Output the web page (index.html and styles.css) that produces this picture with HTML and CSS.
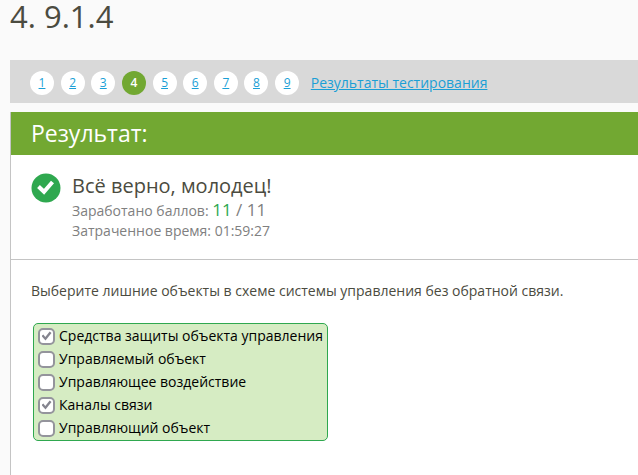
FILE: index.html
```
<!DOCTYPE html>
<html lang="ru">
<head>
    <meta charset="UTF-8">
    <meta name="viewport" content="width=device-width, initial-scale=1.0">
    <title>4. 9.1.4</title>
    <link rel="stylesheet" href="styles.css">
</head>
<body>
    <div class="container">
        <h1>4. 9.1.4</h1>

        <nav class="question-nav">
            <a class="question" href="#1">1</a>
            <a class="question" href="#2">2</a>
            <a class="question" href="#3">3</a>
            <span class="question current">4</span>
            <a class="question" href="#5">5</a>
            <a class="question" href="#6">6</a>
            <a class="question" href="#7">7</a>
            <a class="question" href="#8">8</a>
            <a class="question" href="#9">9</a>
            <a class="results-link" href="#results">Результаты тестирования</a>
        </nav>

        <main class="panel">
            <h2>Результат:</h2>

            <section class="result">
                <svg class="result-icon" viewBox="0 0 30 30" aria-hidden="true">
                    <circle cx="15" cy="15" r="14.5" fill="#2fa84f"/>
                    <path d="M7.5 13.5 L13 18.8 L21.5 9" fill="none" stroke="#fff" stroke-width="4"/>
                </svg>
                <div class="result-info">
                    <h3>Всё верно, молодец!</h3>
                    <p>Заработано баллов: <span class="score"><span class="earned">11</span> / 11</span></p>
                    <p>Затраченное время: 01:59:27</p>
                </div>
            </section>

            <section class="task">
                <p class="task-text">Выберите лишние объекты в схеме системы управления без обратной связи.</p>
                <div class="answers">
                    <label><input type="checkbox" checked>Средства защиты объекта управления</label>
                    <label><input type="checkbox">Управляемый объект</label>
                    <label><input type="checkbox">Управляющее воздействие</label>
                    <label><input type="checkbox" checked>Каналы связи</label>
                    <label><input type="checkbox">Управляющий объект</label>
                </div>
            </section>
        </main>
    </div>
</body>
</html>
```
FILE: styles.css
```
:root {
    --green: #72a832;
    --success: #2fa84f;
    --link: #1a9fd6;
    --text: #4b4b40;
    --muted: #808080;
    --border: #c4c4c4;
}

* {
    margin: 0;
    padding: 0;
    box-sizing: border-box;
}

body {
    background-color: #fafafa;
    color: var(--text);
    font-family: 'Open Sans', 'Noto Sans', sans-serif;
    font-size: 14px;
    line-height: 20px;
}

.container {
    display: flex;
    flex-direction: column;
    min-height: 100vh;
    padding-left: 10px;
}

h1 {
    margin-bottom: 28px;
    font-size: 31px;
    font-weight: 400;
    line-height: 32px;
}

.question-nav {
    margin-bottom: 9px;
    padding: 11px 20px 8px;
    background-color: #d9d9d9;
    font-size: 14px;
    line-height: 24px;
}

.question {
    display: inline-block;
    width: 24px;
    height: 24px;
    margin-right: 3px;
    border-radius: 50%;
    background-color: white;
    font-size: 12px;
    text-align: center;
    vertical-align: top;
}

.question-nav a {
    color: var(--link);
}

.question.current {
    background-color: var(--green);
    color: white;
    font-weight: 600;
}

.results-link {
    margin-left: 5px;
}

.panel {
    flex: 1;
    border-left: 1px solid var(--border);
    background-color: white;
}

h2 {
    padding: 0 20px;
    background-color: var(--green);
    color: white;
    font-size: 23px;
    font-weight: 400;
    line-height: 43px;
}

.result {
    display: flex;
    gap: 11px;
    padding: 18px 20px;
    border-bottom: 1px solid var(--border);
}

.result-icon {
    flex: none;
    width: 30px;
    height: 30px;
}

.result-info {
    color: var(--muted);
}

h3 {
    margin-bottom: 2px;
    color: var(--text);
    font-size: 20px;
    font-weight: 400;
    line-height: 25px;
}

.score {
    font-size: 17px;
}

.earned {
    color: var(--success);
}

.task {
    padding: 21px 20px;
}

.task-text {
    margin-bottom: 22px;
}

.answers {
    display: inline-flex;
    flex-direction: column;
    gap: 3px;
    margin-left: 2px;
    padding: 2px 4px;
    border: 1px solid var(--success);
    border-radius: 5px;
    background-color: #d6ecc3;
    color: black;
}

.answers label {
    display: flex;
    align-items: center;
    gap: 4px;
}

.answers input {
    appearance: none;
    width: 17px;
    height: 17px;
    border: 2px solid #94949c;
    border-radius: 5px;
    background-color: white;
}

.answers input:checked {
    display: grid;
    place-items: center;
}

.answers input:checked::before {
    content: "";
    width: 10px;
    height: 10px;
    background-color: #85858f;
    clip-path: polygon(0 50%, 18% 36%, 38% 60%, 82% 6%, 100% 20%, 40% 94%);
}
```
